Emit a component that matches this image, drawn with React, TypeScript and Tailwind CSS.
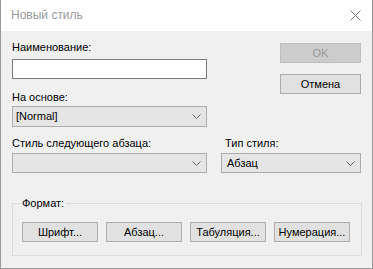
import React from "react";

const font = { fontFamily: '"Liberation Sans", Arial, sans-serif' };

function Chevron() {
  return (
    <svg width="9" height="5" viewBox="0 0 9 5" className="shrink-0">
      <path d="M0.5 0.5 L4.5 4.5 L8.5 0.5" fill="none" stroke="#606060" strokeWidth="1" />
    </svg>
  );
}

function Combo({ text, w }: { text?: string; w: string }) {
  return (
    <div className={`${w} flex items-center justify-between border border-[#adadad] bg-[#e5e5e5] pl-[3px] pr-[5px] text-[11px] leading-[15px] text-black`}>
      <span>{text ?? ""}</span>
      <Chevron />
    </div>
  );
}

function Btn({ children, disabled }: { children: React.ReactNode; disabled?: boolean }) {
  return (
    <div
      className={
        disabled
          ? "flex h-[20px] w-[81px] items-center justify-center border border-[#bfbfbf] bg-[#cccccc] text-[11px] leading-[15px] text-[#9a9a9a]"
          : "flex h-[20px] w-[81px] items-center justify-center border border-[#adadad] bg-[#e1e1e1] text-[11px] leading-[15px] text-black"
      }
    >
      {children}
    </div>
  );
}

function SmallBtn({ children }: { children: React.ReactNode }) {
  return (
    <div className="flex h-[20px] w-[76px] items-center justify-center border border-[#adadad] bg-[#e1e1e1] text-[11px] leading-[15px] text-black">
      {children}
    </div>
  );
}

export default function App() {
  return (
    <div style={font} className="flex h-[269px] w-[373px] flex-col border-x border-b border-[#9a9a9a] bg-[#f0f0f0] text-[11px] leading-[15px] text-black">
      <div className="flex h-[31px] shrink-0 items-center justify-between bg-white pl-[10px] pr-[11px]">
        <span className="text-[12px] text-[#999999]">Новый стиль</span>
        <svg width="11" height="11" viewBox="0 0 11 11">
          <path d="M0.5 0.5 L10.5 10.5 M10.5 0.5 L0.5 10.5" stroke="#777777" strokeWidth="1" />
        </svg>
      </div>
      <div className="flex flex-col pl-[11px] pr-[10px]">
        <div className="flex">
          <div className="flex w-[195px] flex-col">
            <div className="mt-[9px]">Наименование:</div>
            <div className="mt-[4px] h-[20px] w-[195px] border border-[#7a7a7a] bg-white" />
            <div className="mt-[11px]">На основе:</div>
            <div className="mt-px h-[21px]">
              <Combo text="[Normal]" w="h-[21px] w-[195px]" />
            </div>
          </div>
          <div className="ml-auto mr-px flex flex-col pt-[12px]">
            <Btn disabled>OK</Btn>
            <div className="mt-[11px]">
              <Btn>Отмена</Btn>
            </div>
          </div>
        </div>
        <div className="mt-[9px] flex">
          <div className="flex w-[195px] flex-col">
            <div>Стиль следующего абзаца:</div>
            <div className="mt-[2px]">
              <Combo w="h-[20px] w-[195px]" />
            </div>
          </div>
          <div className="ml-auto mr-px flex w-[140px] flex-col">
            <div className="pl-[4px]">Тип стиля:</div>
            <div className="mt-[2px]">
              <Combo text="Абзац" w="h-[20px] w-[140px] pl-[5px]" />
            </div>
          </div>
        </div>
        <fieldset className="mt-[23px] h-[60px] w-[350px] border border-[#dcdcdc] pl-[9px]">
          <legend className="-ml-[2px] px-[2px] text-[11px] leading-[15px]">Формат:</legend>
          <div className="mt-[11px] flex gap-[8px]">
            <SmallBtn>Шрифт...</SmallBtn>
            <SmallBtn>Абзац...</SmallBtn>
            <SmallBtn>Табуляция...</SmallBtn>
            <SmallBtn>Нумерация...</SmallBtn>
          </div>
        </fieldset>
      </div>
    </div>
  );
}
